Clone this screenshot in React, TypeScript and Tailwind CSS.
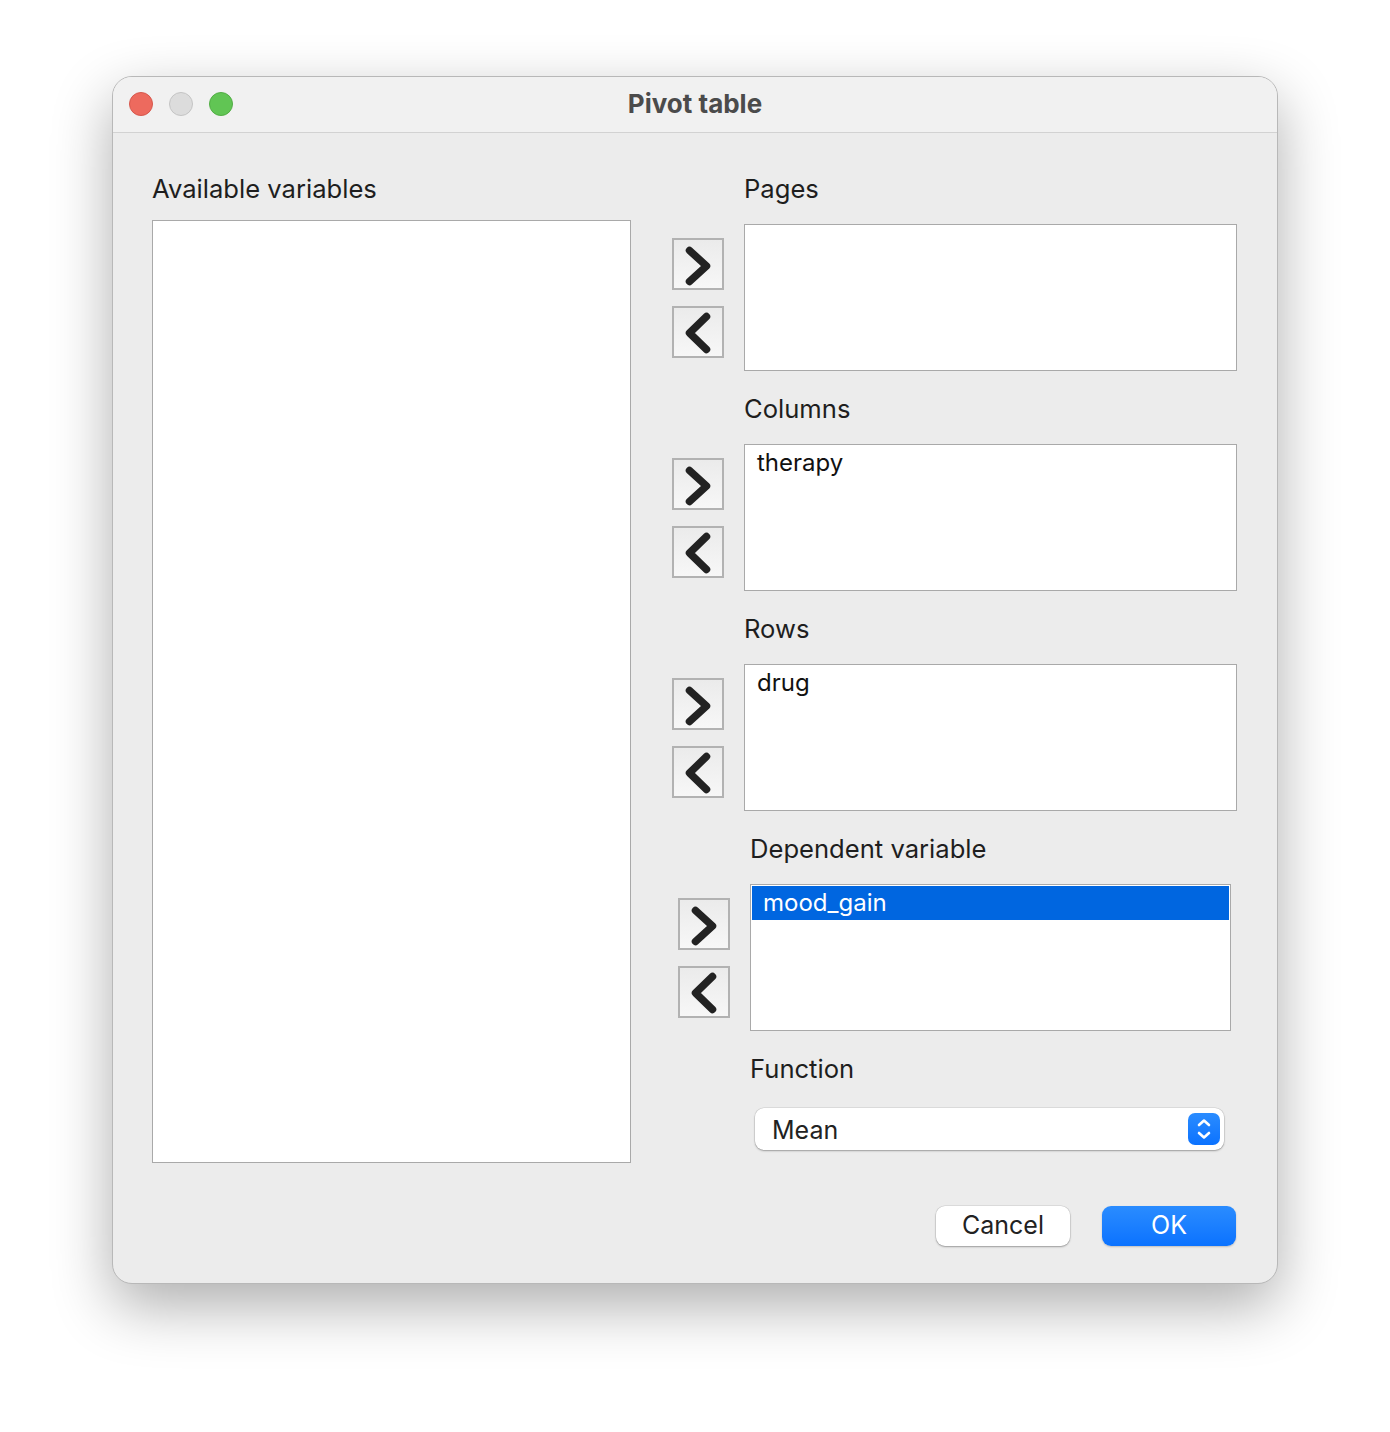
import React from 'react';

const font = { fontFamily: 'Inter, "Noto Sans", "Liberation Sans", sans-serif' };

function ArrowButton({ dir }: { dir: 'right' | 'left' }) {
  return (
    <button className="w-[52px] h-[52px] border-2 border-[#b2b2b2] bg-gradient-to-b from-[#ebebeb] to-[#f7f7f7] flex items-center justify-center">
      <svg width="48" height="48" viewBox="2 2 48 48" fill="none">
        {dir === 'right' ? (
          <path d="M17.5 12.5 L34.5 28 L17.5 43.5" stroke="#222" strokeWidth="7.5" strokeLinecap="round" strokeLinejoin="round" />
        ) : (
          <path d="M34.5 10.5 L17.5 27 L34.5 43.5" stroke="#222" strokeWidth="7.5" strokeLinecap="round" strokeLinejoin="round" />
        )}
      </svg>
    </button>
  );
}

function Group({ label, items, selected, shifted }: { label: string; items: string[]; selected?: boolean; shifted?: boolean }) {
  return (
    <div className={shifted ? 'flex flex-col pl-[6px] pr-[6px]' : 'flex flex-col'}>
      <div className="h-[36px] flex items-center pl-[72px] text-[25.6px] text-[#1e1e1e]">{label}</div>
      <div className="mt-[17px] flex items-center gap-[20px]">
        <div className="flex flex-col gap-[16px] pt-[1px]">
          <ArrowButton dir="right" />
          <ArrowButton dir="left" />
        </div>
        <div className="flex-1 h-[147px] bg-white border border-[#a9a9a9] p-[1px]">
          {items.map((it) => (
            <div
              key={it}
              className={
                selected
                  ? 'h-[34px] flex items-center px-[11px] text-[24px] bg-[#0066e0] text-white'
                  : 'h-[34px] flex items-center px-[11px] text-[24px] text-[#111]'
              }
            >
              {it}
            </div>
          ))}
        </div>
      </div>
    </div>
  );
}

export default function App() {
  return (
    <div className="min-h-screen bg-white pt-[76px] pb-[149px]" style={font}>
      <div className="mx-auto w-[1166px] rounded-[20px] bg-[#ececec] border border-[#b8b8b8] shadow-[0_22px_60px_rgba(0,0,0,0.32)] overflow-hidden">
        {/* Title bar */}
        <div className="relative h-[56px] bg-[#f1f1f1] border-b border-[#d2d2d2] flex items-center justify-center">
          <div className="absolute left-[16px] top-[15px] flex gap-[16px]">
            <span className="w-[24px] h-[24px] rounded-full bg-[#ed6a5e] border border-[#d6584d]" />
            <span className="w-[24px] h-[24px] rounded-full bg-[#dcdcdc] border border-[#c4c4c4]" />
            <span className="w-[24px] h-[24px] rounded-full bg-[#61c554] border border-[#52ad45]" />
          </div>
          <span className="text-[26px] font-bold text-[#4b4b4b] -mt-[2px]">Pivot table</span>
        </div>

        {/* Body */}
        <div className="px-[39px] pt-[38px] pb-[37px]">
          <div className="flex h-[992px]">
            <div className="w-[479px] flex flex-col">
              <div className="h-[36px] flex items-center text-[25.6px] text-[#1e1e1e]">Available variables</div>
              <div className="mt-[13px] h-[943px] bg-white border border-[#a9a9a9]" />
            </div>
            <div className="ml-[41px] w-[565px] flex flex-col gap-[20px]">
              <Group label="Pages" items={[]} />
              <Group label="Columns" items={['therapy']} />
              <Group label="Rows" items={['drug']} />
              <Group label="Dependent variable" items={['mood_gain']} selected shifted />
              <div className="flex flex-col">
                <div className="h-[36px] flex items-center pl-[78px] text-[25.6px] text-[#1e1e1e]">Function</div>
                <div className="mt-[21px] ml-[83px] w-[469px] h-[42px] bg-white rounded-[9px] shadow-[0_1px_2px_rgba(0,0,0,0.3),0_0_0_0.5px_rgba(0,0,0,0.12)] flex items-center justify-between pl-[17px] pr-[4px]">
                  <span className="text-[25px] text-[#222] pt-[3px]">Mean</span>
                  <span className="w-[32px] h-[32px] rounded-[7px] bg-gradient-to-b from-[#2a8cff] to-[#0a72ff] flex items-center justify-center">
                    <svg width="20" height="26" viewBox="0 0 20 26" fill="none">
                      <path d="M5 9 L10 4.5 L15 9" stroke="white" strokeWidth="2.6" strokeLinecap="round" strokeLinejoin="round" />
                      <path d="M5 17 L10 21.5 L15 17" stroke="white" strokeWidth="2.6" strokeLinecap="round" strokeLinejoin="round" />
                    </svg>
                  </span>
                </div>
              </div>
            </div>
          </div>

          {/* Footer */}
          <div className="mt-[43px] flex justify-end gap-[32px] pr-[2px]">
            <button className="w-[134px] h-[40px] rounded-[9px] bg-white shadow-[0_1px_2px_rgba(0,0,0,0.3),0_0_0_0.5px_rgba(0,0,0,0.12)] text-[25px] text-[#222]">
              Cancel
            </button>
            <button className="w-[134px] h-[40px] rounded-[9px] bg-gradient-to-b from-[#2a8cff] to-[#0a72ff] shadow-[0_1px_2px_rgba(0,0,0,0.2)] text-[25px] text-white">
              OK
            </button>
          </div>
        </div>
      </div>
    </div>
  );
}
